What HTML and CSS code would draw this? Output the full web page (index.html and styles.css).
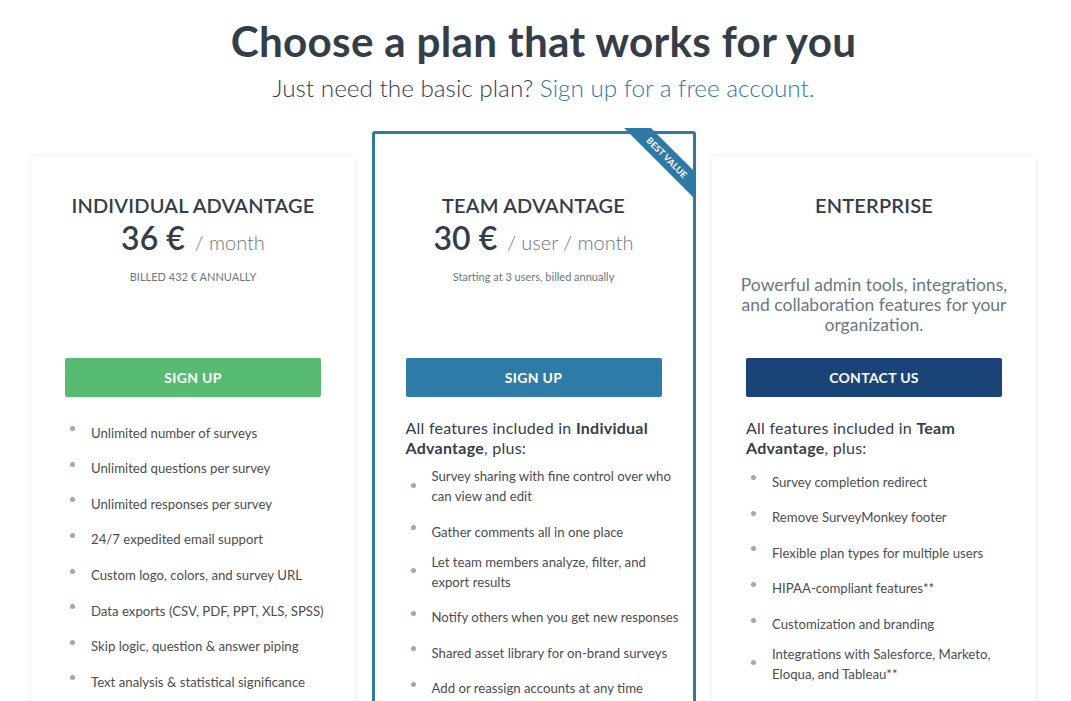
FILE: index.html
```html
<!DOCTYPE html>
<html lang="en">
<head>
<meta charset="utf-8">
<title>Choose a plan</title>
<link rel="stylesheet" href="styles.css">
</head>
<body>
<header class="hero">
  <h1 class="hero-title">Choose a plan that works for you</h1>
  <p class="hero-sub">Just need the basic plan? <a class="hero-link" href="#">Sign up for a free account.</a></p>
</header>
<main class="plans">
  <section class="card">
    <div class="card-head">
      <h2 class="plan-name">INDIVIDUAL ADVANTAGE</h2>
      <div class="price"><span class="amount">36 €</span><span class="per">/ month</span></div>
      <p class="billing caps">BILLED 432 € ANNUALLY</p>
    </div>
    <a class="btn btn-green" href="#">SIGN UP</a>
    <ul class="features">
      <li class="feature">Unlimited number of surveys</li>
      <li class="feature">Unlimited questions per survey</li>
      <li class="feature">Unlimited responses per survey</li>
      <li class="feature">24/7 expedited email support</li>
      <li class="feature">Custom logo, colors, and survey URL</li>
      <li class="feature">Data exports (CSV, PDF, PPT, XLS, SPSS)</li>
      <li class="feature">Skip logic, question &amp; answer piping</li>
      <li class="feature">Text analysis &amp; statistical significance</li>
    </ul>
  </section>
  <section class="card card-featured">
    <div class="ribbon"><span class="ribbon-band">BEST VALUE</span></div>
    <div class="card-head">
      <h2 class="plan-name">TEAM ADVANTAGE</h2>
      <div class="price"><span class="amount">30 €</span><span class="per">/ user / month</span></div>
      <p class="billing">Starting at 3 users, billed annually</p>
    </div>
    <a class="btn btn-blue" href="#">SIGN UP</a>
    <p class="includes">All features included in <strong>Individual</strong><br><strong>Advantage</strong>, plus:</p>
    <ul class="features features-tight">
      <li class="feature">Survey sharing with fine control over who can view and edit</li>
      <li class="feature">Gather comments all in one place</li>
      <li class="feature">Let team members analyze, filter, and export results</li>
      <li class="feature">Notify others when you get new responses</li>
      <li class="feature">Shared asset library for on-brand surveys</li>
      <li class="feature">Add or reassign accounts at any time</li>
    </ul>
  </section>
  <section class="card">
    <div class="card-head">
      <h2 class="plan-name">ENTERPRISE</h2>
      <p class="desc">Powerful admin tools, integrations, and collaboration features for your organization.</p>
    </div>
    <a class="btn btn-navy" href="#">CONTACT US</a>
    <p class="includes">All features included in <strong>Team</strong><br><strong>Advantage</strong>, plus:</p>
    <ul class="features features-tight">
      <li class="feature">Survey completion redirect</li>
      <li class="feature">Remove SurveyMonkey footer</li>
      <li class="feature">Flexible plan types for multiple users</li>
      <li class="feature">HIPAA-compliant features**</li>
      <li class="feature">Customization and branding</li>
      <li class="feature">Integrations with Salesforce, Marketo, Eloqua, and Tableau**</li>
    </ul>
  </section>
</main>
</body>
</html>
```

FILE: styles.css
```css
* { box-sizing: border-box; }
html, body { margin: 0; padding: 0; background: #ffffff; overflow: hidden; }
body {
  font-family: "Lato", "Liberation Sans", sans-serif;
  color: #333e48;
  height: 701px;
}
.hero { text-align: center; padding: 16px 0 0 16px; }
.hero-title {
  margin: 0;
  font-size: 42.2px;
  font-weight: 700;
  line-height: 50px;
  color: #333e48;
  letter-spacing: 0.3px;
}
.hero-sub {
  margin: 9px 0 0;
  font-size: 24.3px;
  font-weight: 300;
  line-height: 26px;
  color: #333e48;
}
.hero-link { color: #2e7aa6; text-decoration: none; }

.plans {
  width: 1006px;
  margin: 30px 0 0 31px;
  display: flex;
  align-items: flex-start;
  gap: 16.5px;
}
.card {
  position: relative;
  flex: 0 0 324px;
  margin-top: 25px;
  background: #fff;
  border-radius: 3px;
  box-shadow: 0 0 5px rgba(0,0,0,0.09);
  padding: 0 34px 40px;
  height: 560px;
}
.card-featured {
  margin-top: 0;
  border: 3px solid #2e7aa6;
  padding: 0 31px 40px;
  height: 590px;
  box-shadow: none;
}
.card-head {
  height: 202px;
  padding-top: 36px;
  text-align: center;
}
.card-featured .card-head { height: 224px; padding-top: 58px; }
.plan-name {
  margin: 0;
  font-size: 20px;
  font-weight: 600;
  line-height: 26px;
  letter-spacing: 0.2px;
  color: #333e48;
}
.price { margin-top: 2px; line-height: 36px; }
.amount { font-size: 32px; font-weight: 600; color: #333e48; }
.per { font-size: 20px; font-weight: 300; color: #6b787f; margin-left: 10px; }
.billing { margin: 8px 0 0; font-size: 11px; color: #6b787f; line-height: 14px; }
.desc {
  margin: 57px -9px 0;
  font-size: 17.5px;
  line-height: 20px;
  color: #6b787f;
  font-weight: 400;
}
.btn {
  display: block;
  height: 39px;
  line-height: 39px;
  text-align: center;
  color: #fff;
  text-decoration: none;
  font-size: 14px;
  font-weight: 700;
  border-radius: 2px;
  letter-spacing: 0.3px;
}
.btn-green { background: #57bb71; }
.btn-blue { background: #2f7ba7; }
.btn-navy { background: #1a4478; }

.includes {
  margin: 20.5px 0 0;
  font-size: 16px;
  line-height: 20px;
  letter-spacing: 0.25px;
  color: #333e48;
}
.includes strong { font-weight: 700; }

.features {
  list-style: none;
  margin: 20px -20px 0 0;
  padding: 0;
}
.features-tight { margin-top: 8.5px; }
.feature {
  position: relative;
  display: flex;
  align-items: flex-end;
  min-height: 25.6px;
  padding-left: 26px;
  margin-bottom: 10px;
  font-size: 13.2px;
  line-height: 20px;
  color: #4d4d4d;
}
.feature::before {
  content: "";
  position: absolute;
  left: 5px;
  top: 50%;
  width: 5px;
  height: 5px;
  margin-top: -3.5px;
  border-radius: 50%;
  background: #a3a8ad;
}

.ribbon {
  position: absolute;
  top: -6px;
  right: -3px;
  width: 72px;
  height: 72px;
  overflow: hidden;
}
.ribbon-band {
  position: absolute;
  left: -17px;
  top: 19.5px;
  width: 120px;
  height: 19px;
  line-height: 19px;
  background: #2e7aa6;
  color: #fff;
  font-size: 9px;
  font-weight: 700;
  text-align: center;
  transform: rotate(45deg);
  letter-spacing: 0.2px;
}
```
